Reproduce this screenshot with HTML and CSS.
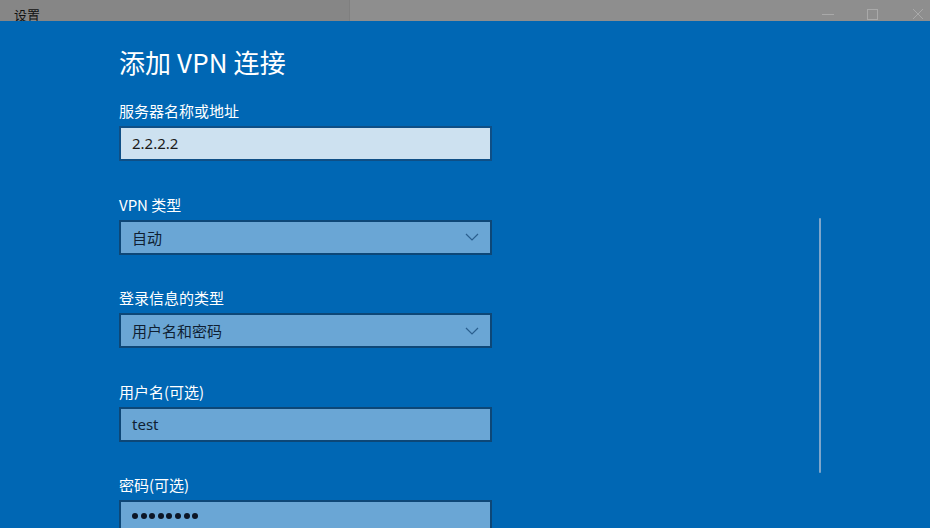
FILE: index.html
```html
<!DOCTYPE html>
<html lang="zh-CN">
<head>
<meta charset="utf-8">
<title>设置</title>
<link rel="stylesheet" href="styles.css">
</head>
<body>
<div class="titlebar">
  <div class="titlebar-app"><span class="titlebar-text">设置</span></div>
  <div class="titlebar-rest">
    <span class="ctrl">
      <svg width="12" height="12" viewBox="0 0 12 12"><path d="M0 6.5h12" stroke="#a9a9a9" stroke-width="1" fill="none"/></svg>
    </span>
    <span class="ctrl">
      <svg width="12" height="12" viewBox="0 0 12 12"><rect x="0.5" y="1.5" width="10" height="10" stroke="#a9a9a9" stroke-width="1" fill="none"/></svg>
    </span>
    <span class="ctrl">
      <svg width="12" height="12" viewBox="0 0 12 12"><path d="M1 1l10 10M11 1l-10 10" stroke="#a9a9a9" stroke-width="1" fill="none"/></svg>
    </span>
  </div>
</div>

<main class="page">
  <div class="content">
    <h1 class="heading">添加 VPN 连接</h1>

    <div class="field">
      <label class="field-label">服务器名称或地址</label>
      <div class="box box-focus">2.2.2.2</div>
    </div>

    <div class="field">
      <label class="field-label">VPN 类型</label>
      <div class="box box-select">
        <span>自动</span>
        <svg class="chev" width="14" height="8" viewBox="0 0 14 8"><path d="M1 1l6 6 6-6" stroke="#2b5f8e" stroke-width="1.2" fill="none"/></svg>
      </div>
    </div>

    <div class="field">
      <label class="field-label">登录信息的类型</label>
      <div class="box box-select">
        <span>用户名和密码</span>
        <svg class="chev" width="14" height="8" viewBox="0 0 14 8"><path d="M1 1l6 6 6-6" stroke="#2b5f8e" stroke-width="1.2" fill="none"/></svg>
      </div>
    </div>

    <div class="field">
      <label class="field-label">用户名(可选)</label>
      <div class="box">test</div>
    </div>

    <div class="field">
      <label class="field-label">密码(可选)</label>
      <div class="box box-dots">
        <i></i><i></i><i></i><i></i><i></i><i></i><i></i><i></i>
      </div>
    </div>
  </div>

  <div class="scrolltrack"><div class="scrollthumb"></div></div>
</main>
</body>
</html>
```

FILE: styles.css
```css
html, body {
  margin: 0;
  padding: 0;
  height: 100%;
  overflow: hidden;
}

body {
  background: #0067b4;
  font-family: "Noto Sans", "Noto Sans CJK SC", sans-serif;
  color: #ffffff;
}

/* window caption strip */
.titlebar {
  display: flex;
  height: 21px;
  overflow: hidden;
}

.titlebar-app {
  width: 350px;
  background: #868686;
  border-right: 1px solid #7f7f7f;
  box-sizing: border-box;
  padding: 7px 0 0 14px;
}

.titlebar-text {
  display: block;
  font-family: "Noto Sans CJK SC", sans-serif;
  font-size: 13px;
  line-height: 16px;
  color: #111111;
}

.titlebar-rest {
  flex: 1;
  background: #8e8e8e;
  display: flex;
  justify-content: flex-end;
  align-items: flex-start;
  gap: 33px;
  padding-top: 8px;
  padding-right: 6px;
}

.ctrl {
  width: 12px;
  height: 13px;
  display: flex;
}

/* page body */
.page {
  display: flex;
  height: calc(100% - 21px);
}

.content {
  width: 700px;
  padding: 22px 0 0 119px;
  box-sizing: border-box;
}

.heading {
  margin: 0 0 20px;
  font-family: "Noto Sans CJK SC", sans-serif;
  font-weight: 400;
  font-size: 26px;
  line-height: 38px;
  letter-spacing: 0.1px;
}

.field {
  display: flex;
  flex-direction: column;
  margin-bottom: 33.5px;
}

.field-label {
  font-family: "Noto Sans CJK SC", sans-serif;
  font-size: 15px;
  line-height: 20px;
  margin-bottom: 5px;
}

.box {
  width: 373px;
  height: 35px;
  box-sizing: border-box;
  border: 2px solid #0d4777;
  background: #6aa6d5;
  color: #0f1f33;
  font-family: "Noto Sans", "Noto Sans CJK SC", sans-serif;
  font-size: 15px;
  line-height: 31px;
  padding: 0 10px 0 11px;
  display: flex;
  align-items: center;
}

.box-focus {
  background: #cde1f0;
  border-color: #0f4f86;
  color: #1a1a1a;
}

.box-select {
  justify-content: space-between;
}

.box-select span {
  font-family: "Noto Sans CJK SC", sans-serif;
}

.chev {
  margin-right: 1px;
}

.box-dots {
  gap: 2.6px;
  align-items: flex-start;
  padding-top: 11px;
}

.box-dots i {
  display: block;
  width: 6px;
  height: 6px;
  border-radius: 50%;
  background: #0c1626;
}

/* thin scroll indicator */
.scrolltrack {
  margin-left: 119px;
  padding-top: 197px;
}

.scrollthumb {
  width: 2px;
  height: 255px;
  border-radius: 1px;
  background: #7ea6cb;
}
```
